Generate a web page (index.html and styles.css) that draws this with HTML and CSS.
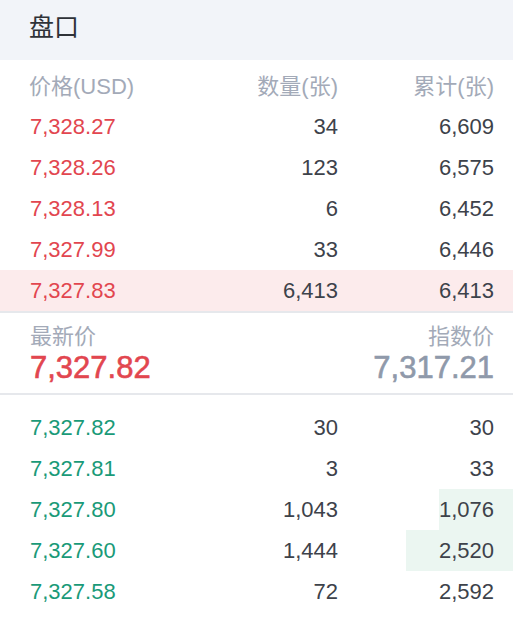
FILE: index.html
```html
<!DOCTYPE html>
<html lang="zh">
<head>
<meta charset="utf-8">
<title>盘口</title>
<link rel="stylesheet" href="styles.css">
</head>
<body>
<div class="book">
  <div class="header"><span class="title">盘口</span></div>
  <div class="row colhead">
    <span class="c1">价格(USD)</span><span class="c2">数量(张)</span><span class="c3">累计(张)</span>
  </div>
  <div class="asks">
    <div class="row ask"><span class="c1">7,328.27</span><span class="c2">34</span><span class="c3">6,609</span></div>
    <div class="row ask"><span class="c1">7,328.26</span><span class="c2">123</span><span class="c3">6,575</span></div>
    <div class="row ask"><span class="c1">7,328.13</span><span class="c2">6</span><span class="c3">6,452</span></div>
    <div class="row ask"><span class="c1">7,327.99</span><span class="c2">33</span><span class="c3">6,446</span></div>
    <div class="row ask hl"><span class="c1">7,327.83</span><span class="c2">6,413</span><span class="c3">6,413</span></div>
  </div>
  <div class="mid">
    <div class="mid-col">
      <span class="mid-label">最新价</span>
      <span class="mid-price last">7,327.82</span>
    </div>
    <div class="mid-col right">
      <span class="mid-label">指数价</span>
      <span class="mid-price index">7,317.21</span>
    </div>
  </div>
  <div class="bids">
    <div class="row bid"><span class="c1">7,327.82</span><span class="c2">30</span><span class="c3">30</span></div>
    <div class="row bid"><span class="c1">7,327.81</span><span class="c2">3</span><span class="c3">33</span></div>
    <div class="row bid"><span class="bar" style="width:74px"></span><span class="c1">7,327.80</span><span class="c2">1,043</span><span class="c3">1,076</span></div>
    <div class="row bid"><span class="bar" style="width:107px"></span><span class="c1">7,327.60</span><span class="c2">1,444</span><span class="c3">2,520</span></div>
    <div class="row bid"><span class="c1">7,327.58</span><span class="c2">72</span><span class="c3">2,592</span></div>
  </div>
</div>
</body>
</html>
```

FILE: styles.css
```css
html, body {
  margin: 0;
  padding: 0;
  background: #ffffff;
}
body {
  font-family: "Liberation Sans", "Noto Sans CJK SC", sans-serif;
  color: #3d424a;
}
.book {
  width: 513px;
}
.header {
  height: 60px;
  background: #f2f4f9;
  padding-left: 29px;
  box-sizing: border-box;
  display: flex;
  align-items: center;
  padding-bottom: 10px;
}
.title {
  font-size: 25px;
  color: #2f3238;
}
.row {
  position: relative;
  display: grid;
  grid-template-columns: 1fr 160px 156px;
  height: 41px;
  align-items: center;
  padding: 0 19px 0 30px;
  font-size: 22px;
}
.row > .c1, .row > .c2, .row > .c3 { position: relative; }
.c2, .c3 { text-align: right; }
.colhead {
  height: 46px;
  padding-top: 2px;
  box-sizing: border-box;
  color: #a3aab8;
  font-size: 22px;
}
.colhead .c1 { margin-left: -1px; }
.ask .c1 { color: #e2464f; }
.bid .c1 { color: #1a9a78; }
.hl { background: #fcebec; }
.asks {
  border-bottom: 2px solid #e6e8ec;
}
.mid {
  display: flex;
  justify-content: space-between;
  padding: 10px 19px 8px 30px;
  height: 82px;
  box-sizing: border-box;
  border-bottom: 2px solid #e6e8ec;
}
.mid-col {
  display: flex;
  flex-direction: column;
}
.mid-col.right { align-items: flex-end; }
.mid-label {
  font-size: 22px;
  color: #a3aab8;
  line-height: 28px;
}
.mid-price {
  font-size: 31px;
  line-height: 34px;
  -webkit-text-stroke: 0.6px currentColor;
}
.mid-price.last { color: #e2464f; }
.mid-price.index { color: #8f99aa; }
.bids {
  padding-top: 12px;
}
.row > .bar {
  position: absolute;
  right: 0;
  top: 0;
  bottom: 0;
  background: #ebf6f1;
}
```
